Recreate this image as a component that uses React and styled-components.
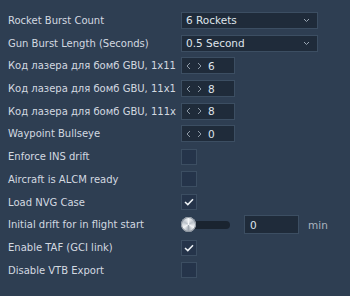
import { Fragment } from "react";
import styled, { createGlobalStyle } from "styled-components";

const GlobalStyle = createGlobalStyle`
  html, body {
    margin: 0;
    padding: 0;
    background: #2e3e52;
  }
  body {
    font-family: "DejaVu Sans", "Liberation Sans", sans-serif;
    color: #d6dce3;
  }
`;

const Panel = styled.div`
  width: 350px;
  height: 296px;
  box-sizing: border-box;
  padding: 9px 0 0 8px;
  display: grid;
  grid-template-columns: 173px 1fr;
  grid-auto-rows: 22.73px;
  background: #2e3e52;
  overflow: hidden;
`;

const Label = styled.div`
  display: flex;
  align-items: center;
  font-size: 10px;
  color: #d3d9e0;
  white-space: nowrap;
`;

const Cell = styled.div`
  display: flex;
  align-items: center;
  gap: 9px;
`;

const Box = styled.div`
  box-sizing: border-box;
  height: 17px;
  background: #1f2b3a;
  border: 1px solid #3c4e62;
  display: flex;
  align-items: center;
  font-size: 10.5px;
  color: #dfe4ea;
`;

const Select = styled(Box)`
  width: 137px;
  padding: 0 7px 0 4px;
  justify-content: space-between;
`;

const Spin = styled(Box)`
  width: 54px;
  padding-left: 4px;
  gap: 6px;
`;

const Arrows = styled.div`
  display: flex;
  gap: 6px;
  align-items: center;
`;

const NumberField = styled(Box)`
  width: 55px;
  height: 19px;
  padding-left: 5px;
  margin-left: 5px;
`;

const Unit = styled.span`
  font-size: 10.5px;
  color: #aab4bf;
`;

const Check = styled.div`
  box-sizing: border-box;
  width: 16px;
  height: 16px;
  background: #25344a;
  border: 1px solid #3c4e62;
  display: flex;
  align-items: center;
  justify-content: center;
`;

const Slider = styled.div`
  position: relative;
  width: 49px;
  height: 16px;
  display: flex;
  align-items: center;
`;

const Track = styled.div`
  width: 100%;
  height: 8px;
  border-radius: 4px;
  background: #1a2430;
`;

const Knob = styled.div`
  position: absolute;
  left: 0;
  top: 0;
  width: 15px;
  height: 15px;
  border-radius: 50%;
  background: conic-gradient(
    from 0deg,
    #f4f6f8,
    #b9c0c8,
    #f4f6f8,
    #9ea6af,
    #f4f6f8,
    #b9c0c8,
    #f4f6f8
  );
  box-shadow: 0 0 0 1px #8b949e inset;
`;

const Chevron = () => (
  <svg width="7" height="5" viewBox="0 0 7 5">
    <path d="M1 1 L3.5 3.5 L6 1" fill="none" stroke="#9aa6b3" strokeWidth="1" />
  </svg>
);

const SpinArrows = () => (
  <Arrows>
    <svg width="5" height="8" viewBox="0 0 5 8">
      <path d="M4 1 L1 4 L4 7" fill="none" stroke="#8d99a6" strokeWidth="1" />
    </svg>
    <svg width="5" height="8" viewBox="0 0 5 8">
      <path d="M1 1 L4 4 L1 7" fill="none" stroke="#8d99a6" strokeWidth="1" />
    </svg>
  </Arrows>
);

const Tick = () => (
  <svg width="10" height="8" viewBox="0 0 10 8">
    <path d="M1 4 L3.8 6.6 L9 1.2" fill="none" stroke="#eef2f5" strokeWidth="1.5" />
  </svg>
);

const rows = [
  { label: "Rocket Burst Count", type: "select", value: "6 Rockets" },
  { label: "Gun Burst Length (Seconds)", type: "select", value: "0.5 Second" },
  { label: "Код лазера для бомб GBU, 1x11", type: "spin", value: "6" },
  { label: "Код лазера для бомб GBU, 11x1", type: "spin", value: "8" },
  { label: "Код лазера для бомб GBU, 111x", type: "spin", value: "8" },
  { label: "Waypoint Bullseye", type: "spin", value: "0" },
  { label: "Enforce INS drift", type: "check", value: false },
  { label: "Aircraft is ALCM ready", type: "check", value: false },
  { label: "Load NVG Case", type: "check", value: true },
  { label: "Initial drift for in flight start", type: "slider", value: "0" },
  { label: "Enable TAF (GCI link)", type: "check", value: true },
  { label: "Disable VTB Export", type: "check", value: false },
];

const Control = ({ type, value }) => {
  if (type === "select") {
    return (
      <Select>
        <span>{value}</span>
        <Chevron />
      </Select>
    );
  }
  if (type === "spin") {
    return (
      <Spin>
        <SpinArrows />
        <span>{value}</span>
      </Spin>
    );
  }
  if (type === "check") {
    return <Check>{value && <Tick />}</Check>;
  }
  return (
    <>
      <Slider>
        <Track />
        <Knob />
      </Slider>
      <NumberField>{value}</NumberField>
      <Unit>min</Unit>
    </>
  );
};

const App = () => (
  <>
    <GlobalStyle />
    <Panel>
      {rows.map((row) => (
        <Fragment key={row.label}>
          <Label>{row.label}</Label>
          <Cell>
            <Control type={row.type} value={row.value} />
          </Cell>
        </Fragment>
      ))}
    </Panel>
  </>
);

export default App;
